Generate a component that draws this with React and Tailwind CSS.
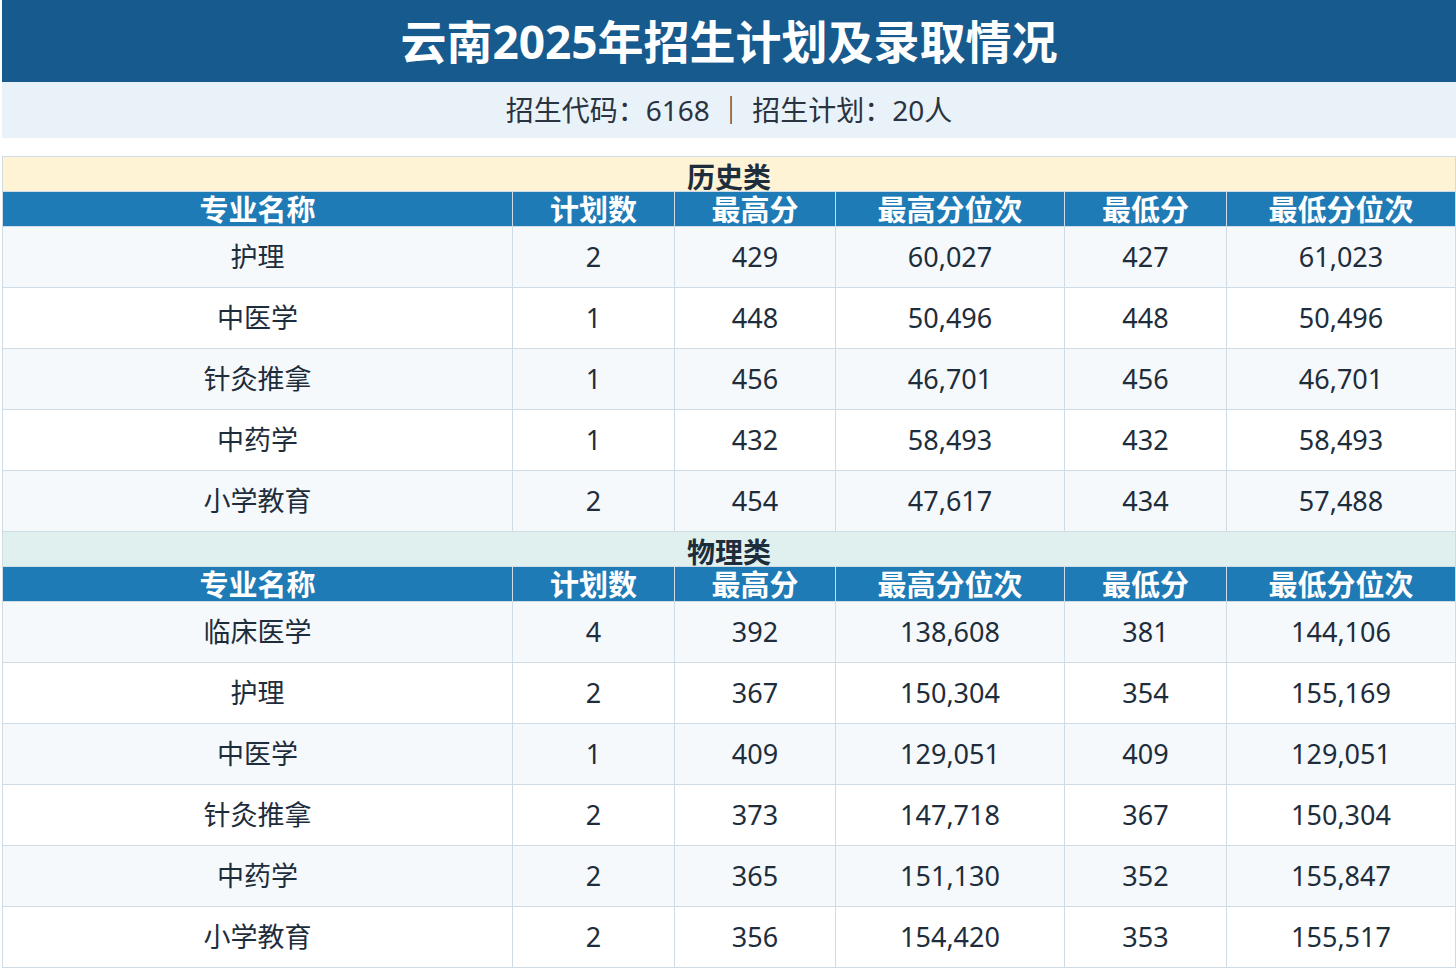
const hist=[["护理","2","429","60,027","427","61,023"],["中医学","1","448","50,496","448","50,496"],["针灸推拿","1","456","46,701","456","46,701"],["中药学","1","432","58,493","432","58,493"],["小学教育","2","454","47,617","434","57,488"]];
const phys=[["临床医学","4","392","138,608","381","144,106"],["护理","2","367","150,304","354","155,169"],["中医学","1","409","129,051","409","129,051"],["针灸推拿","2","373","147,718","367","150,304"],["中药学","2","365","151,130","352","155,847"],["小学教育","2","356","154,420","353","155,517"]];
const heads=["专业名称","计划数","最高分","最高分位次","最低分","最低分位次"];
function Section({name,bg,rows}){return(<>
<tr className={bg+" h-[35px]"}><td colSpan={6} className="border border-[#cfdbe5] text-center font-bold text-[28px] leading-none text-[#1e2d3b] align-bottom p-0">{name}</td></tr>
<tr className="bg-[#1f7bb6] h-[35px]">{heads.map(h=><td key={h} className="border border-[#cfdbe5] text-center text-white font-bold text-[29px] leading-none p-0">{h}</td>)}</tr>
{rows.map((r,i)=><tr key={i} className={(i%2===0?"bg-[#f5f9fc]":"bg-white")+" h-[61px]"}>{r.map((c,j)=><td key={j} className="border border-[#cfdbe5] text-center text-[27px] text-[#1e2d3b] p-0">{c}</td>)}</tr>)}
</>);}
export default function App(){return(<div className="w-[1456px] h-[968px] overflow-hidden bg-white pl-[2px]" style={{fontFamily:'"Noto Sans","Noto Sans CJK SC",sans-serif'}}>
<div className="h-[82px] bg-[#175a8e] flex items-center justify-center text-white font-bold text-[46px]">云南2025年招生计划及录取情况</div>
<div className="h-[56px] bg-[#eaf2f9] flex items-center justify-center text-[28px] text-[#2a3440]">招生代码：6168 ｜ 招生计划：20人</div>
<div className="h-[18px]"></div>
<table className="w-[1454px] border-collapse table-fixed">
<colgroup><col className="w-[510px]"/><col className="w-[162px]"/><col className="w-[161px]"/><col className="w-[229px]"/><col className="w-[162px]"/><col/></colgroup>
<tbody>
<Section name="历史类" bg="bg-[#fff3d6]" rows={hist}/>
<Section name="物理类" bg="bg-[#dff0ee]" rows={phys}/>
</tbody></table>
</div>);}
